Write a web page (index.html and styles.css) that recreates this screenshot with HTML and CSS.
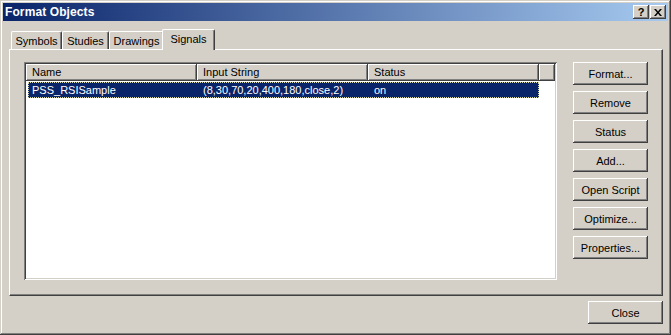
FILE: index.html
```html
<!DOCTYPE html>
<html lang="en">
<head>
    <meta charset="UTF-8">
    <title>Format Objects</title>
    <link rel="stylesheet" href="styles.css">
</head>
<body>
    <div class="window">
        <div class="titlebar">
            <span class="title">Format Objects</span>
            <div class="caption-buttons">
                <div class="caption-btn help">?</div>
                <div class="caption-btn close-x">
                    <svg width="8" height="7" viewBox="0 0 8 7">
                        <path d="M0 0h2l2 2.5 2-2.5h2l-3 3.5 3 3.5h-2l-2-2.5-2 2.5h-2l3-3.5z" fill="#000"/>
                    </svg>
                </div>
            </div>
        </div>

        <div class="content">
            <div class="tabs">
                <div class="tab tab-symbols">Symbols</div>
                <div class="tab tab-studies">Studies</div>
                <div class="tab tab-drawings">Drawings</div>
                <div class="tab tab-signals active">Signals</div>
            </div>

            <div class="panel">
                <div class="listview">
                    <div class="lv-header">
                        <div class="lv-col">Name</div>
                        <div class="lv-col">Input String</div>
                        <div class="lv-col">Status</div>
                        <div class="lv-col filler"></div>
                    </div>
                    <div class="lv-row selected">
                        <div class="lv-cell">PSS_RSISample</div>
                        <div class="lv-cell">(8,30,70,20,400,180,close,2)</div>
                        <div class="lv-cell">on</div>
                    </div>
                </div>

                <div class="side-buttons">
                    <button class="btn">Format...</button>
                    <button class="btn">Remove</button>
                    <button class="btn">Status</button>
                    <button class="btn">Add...</button>
                    <button class="btn">Open Script</button>
                    <button class="btn">Optimize...</button>
                    <button class="btn">Properties...</button>
                </div>
            </div>

            <div class="footer">
                <button class="btn">Close</button>
            </div>
        </div>
    </div>
</body>
</html>
```

FILE: styles.css
```css
body {
    margin: 0;
    font-family: "Liberation Sans", Arial, sans-serif;
    font-size: 11px;
    color: #000;
}

.window {
    width: 671px;
    height: 335px;
    box-sizing: border-box;
    padding: 3px;
    background-color: #d4d0c8;
    box-shadow: inset -1px -1px #404040, inset 1px 1px #d4d0c8,
                inset -2px -2px #808080, inset 2px 2px #fff;
}

.titlebar {
    height: 18px;
    display: flex;
    align-items: center;
    justify-content: space-between;
    padding-left: 2px;
    background: linear-gradient(to right, #0a246a, #a6caf0);
}

.title {
    color: #fff;
    font-weight: bold;
    font-size: 12px;
    letter-spacing: 0.1px;
}

.caption-buttons {
    display: flex;
    gap: 1px;
    margin-right: 2px;
}

.caption-btn {
    width: 16px;
    height: 14px;
    box-sizing: border-box;
    background-color: #d4d0c8;
    box-shadow: inset -1px -1px #404040, inset 1px 1px #fff,
                inset -2px -2px #808080;
    display: flex;
    align-items: center;
    justify-content: center;
    font-weight: bold;
    font-size: 11px;
    line-height: 1;
}

.close-x svg {
    display: block;
}

.content {
    padding: 0 5px 0 6px;
}

.tabs {
    display: flex;
    align-items: flex-end;
    height: 20px;
    margin-top: 8px;
    padding-left: 2px;
}

.tab {
    height: 18px;
    box-sizing: border-box;
    display: flex;
    align-items: center;
    justify-content: center;
    padding-top: 1px;
    border-top: 1px solid #fff;
    border-left: 1px solid #fff;
    border-right: 1px solid #404040;
    border-radius: 2px 2px 0 0;
    box-shadow: inset -1px 0 #808080;
}

.tab-symbols { width: 51px; }
.tab-studies { width: 47px; }
.tab-drawings { width: 55px; }
.tab-signals { width: 49px; }

.tab.active {
    width: 53px;
    height: 21px;
    margin: 0 -2px -1px -2px;
    padding-top: 0;
    padding-bottom: 3px;
    background-color: #d4d0c8;
    position: relative;
    z-index: 1;
}

.panel {
    height: 247px;
    box-sizing: border-box;
    display: flex;
    gap: 16px;
    padding: 12px 14px 0 14px;
    border-top: 1px solid #fff;
    border-left: 1px solid #fff;
    border-right: 1px solid #404040;
    border-bottom: 1px solid #404040;
    box-shadow: inset -1px -1px #808080;
}

.listview {
    width: 533px;
    height: 218px;
    box-sizing: border-box;
    padding: 2px;
    background-color: #fff;
    box-shadow: inset 1px 1px #808080, inset -1px -1px #fff,
                inset 2px 2px #404040, inset -2px -2px #d4d0c8;
}

.lv-header {
    display: flex;
    height: 17px;
}

.lv-col {
    width: 171px;
    box-sizing: border-box;
    padding: 2px 0 0 6px;
    background-color: #d4d0c8;
    box-shadow: inset -1px -1px #404040, inset 1px 1px #fff,
                inset -2px -2px #808080;
}

.lv-col.filler {
    width: 16px;
}

.lv-row {
    display: flex;
    height: 16px;
    margin-top: 1px;
    margin-left: 2px;
    width: 511px;
    box-sizing: border-box;
}

.lv-row.selected {
    background-color: #0a246a;
    color: #fff;
    outline: 1px dotted #d8d8b0;
    outline-offset: -1px;
}

.lv-cell {
    width: 171px;
    padding: 2px 0 0 6px;
    box-sizing: border-box;
}

.lv-cell:first-child {
    width: 169px;
    padding-left: 4px;
}

.side-buttons {
    display: flex;
    flex-direction: column;
    gap: 6px;
}

.btn {
    width: 75px;
    height: 23px;
    padding: 0;
    border: none;
    font-family: "Liberation Sans", Arial, sans-serif;
    font-size: 11px;
    color: #000;
    background-color: #d4d0c8;
    box-shadow: inset -1px -1px #404040, inset 1px 1px #fff,
                inset -2px -2px #808080;
}

.footer {
    display: flex;
    justify-content: flex-end;
    padding-top: 5px;
}
```
